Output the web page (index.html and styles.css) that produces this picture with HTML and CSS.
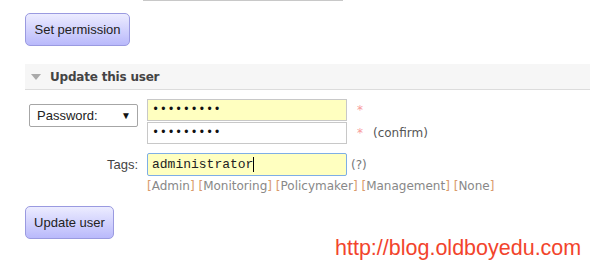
FILE: index.html
```html
<!DOCTYPE html>
<html>
<head>
<meta charset="utf-8">
<link rel="stylesheet" href="styles.css">
</head>
<body>
<div class="topline"></div>
<div class="page">
  <button class="btn btn-perm">Set permission</button>
  <div class="section-head"><span class="tri"></span><span class="section-title">Update this user</span></div>
  <div class="form">
    <div class="label-cell">
      <div class="select"><span>Password:</span><span class="arrow">&#9660;</span></div>
    </div>
    <div class="value-cell">
      <div class="pw-row"><input class="field pw yellow" type="text" value="•••••••••"><span class="star">*</span></div>
      <div class="pw-row second"><input class="field pw" type="text" value="•••••••••"><span class="star">*</span><span class="hint">(confirm)</span></div>
    </div>
    <div class="label-cell tags-label">Tags:</div>
    <div class="value-cell tags-cell">
      <div class="pw-row"><div class="field tags yellow">administrator<span class="caret"></span></div><span class="hint q">(?)</span></div>
      <div class="tag-links"><span class="b">[</span>Admin<span class="b">]</span> <span class="b">[</span>Monitoring<span class="b">]</span> <span class="b">[</span>Policymaker<span class="b">]</span> <span class="b">[</span>Management<span class="b">]</span> <span class="b">[</span>None<span class="b">]</span></div>
    </div>
  </div>
  <button class="btn btn-update">Update user</button>
</div>
<div class="watermark">http://blog.oldboyedu.com</div>
</body>
</html>
```
FILE: styles.css
```css
html, body {
  margin: 0;
  padding: 0;
  background: #fff;
  width: 590px;
  height: 263px;
  overflow: hidden;
  position: relative;
  font-family: "Liberation Sans", Arial, sans-serif;
}
.topline {
  margin-left: 143px;
  width: 200px;
  height: 1px;
  background: #c8c8c8;
}
.page {
  padding-left: 25px;
  display: flex;
  flex-direction: column;
  align-items: flex-start;
}
.btn {
  font-family: "Liberation Sans", Arial, sans-serif;
  font-size: 13px;
  color: #222;
  background: linear-gradient(#ececff, #b9b9fb);
  border: 1px solid #9a9ae0;
  border-radius: 5px;
  height: 33px;
  padding: 0;
  margin: 0;
}
.btn-perm {
  margin-top: 12px;
  width: 105px;
}
.section-head {
  margin-top: 18px;
  align-self: stretch;
  height: 25px;
  background: #f6f6f6;
  border-bottom: 1px solid #dcdcdc;
  display: flex;
  align-items: center;
}
.tri {
  width: 0;
  height: 0;
  margin-left: 6px;
  border-left: 5px solid transparent;
  border-right: 5px solid transparent;
  border-top: 6px solid #aaa;
  margin-top: 1px;
}
.section-title {
  margin-left: 9px;
  font-family: "DejaVu Sans", Verdana, sans-serif;
  font-weight: bold;
  font-size: 12px;
  letter-spacing: -0.2px;
  color: #444;
}
.form {
  margin-top: 9px;
  display: grid;
  grid-template-columns: 113px auto;
  column-gap: 9px;
  row-gap: 9px;
}
.label-cell {
  display: flex;
  justify-content: flex-end;
}
.select {
  margin-top: 5px;
  border: 1px solid #a6a6a6;
  border-radius: 2px;
  display: flex;
  align-items: center;
  justify-content: space-between;
  padding: 0 6px 0 7px;
  box-sizing: border-box;
  width: 109px;
  height: 23px;
  font-size: 13px;
  color: #222;
}
.arrow {
  font-size: 10px;
  color: #111;
}
.value-cell {
  display: flex;
  flex-direction: column;
}
.pw-row {
  display: flex;
  align-items: center;
}
.pw-row.second {
  margin-top: 1px;
}
.field {
  width: 200px;
  height: 22px;
  box-sizing: border-box;
  border: 1px solid #c8c8c8;
  margin: 0;
  padding: 0 4px;
  background: #fff;
  font-family: "Liberation Mono", "Courier New", monospace;
  font-size: 13px;
  color: #111;
  outline: none;
}
.field.pw {
  font-size: 12px;
  letter-spacing: 0.5px;
}
.yellow {
  background: #ffffc0;
}
.field.tags {
  height: 23px;
  border: 1px solid #7eaee6;
  border-radius: 2px;
  display: flex;
  align-items: center;
  color: #222;
}
.caret {
  display: inline-block;
  width: 1px;
  height: 15px;
  background: #000;
}
.star {
  margin-left: 10px;
  color: #f79a9a;
  font-family: "DejaVu Sans", Verdana, sans-serif;
  font-size: 12px;
}
.hint {
  margin-left: 10px;
  font-family: "DejaVu Sans", Verdana, sans-serif;
  font-size: 12px;
  color: #555;
}
.hint.q {
  margin-left: 4px;
  color: #777;
}
.tags-label {
  align-items: center;
  height: 23px;
  font-size: 13px;
  color: #444;
}
.tag-links {
  margin-top: 3px;
  font-family: "DejaVu Sans", Verdana, sans-serif;
  font-size: 12px;
  color: #888;
  white-space: nowrap;
}
.tag-links .b {
  color: #d99a6c;
}
.btn-update {
  margin-top: 13px;
  width: 89px;
}
.watermark {
  position: absolute;
  left: 335px;
  top: 236px;
  font-family: "Liberation Sans", Arial, sans-serif;
  font-size: 21.5px;
  color: #f2442c;
  line-height: 24px;
}
```
